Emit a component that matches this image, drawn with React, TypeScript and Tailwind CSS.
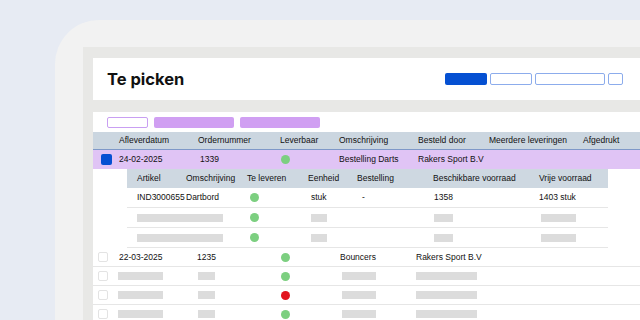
import React from "react";

const font = { fontFamily: '"Liberation Sans", Arial, sans-serif' };

const Dot = ({ red = false, className = "" }: { red?: boolean; className?: string }) => (
  <span
    className={`block w-[9px] h-[9px] rounded-full ${red ? "bg-[#e2141e]" : "bg-[#7ccf80]"} ${className}`}
  />
);

const Bar = ({ w }: { w: string }) => <span className={`block h-[8px] bg-[#dcdcdc] ${w}`} />;

const mainCols = "grid grid-cols-[26px_79px_82px_59px_79px_71px_94px_1fr] items-center";
const subCols = "grid grid-cols-[49px_61px_61px_49px_76px_106px_1fr] items-center";

const EmptyBox = () => (
  <span className="block w-[10px] h-[10px] ml-[5px] rounded-[2px] border border-[#e3e3e3] bg-white" />
);

const PlaceholderRow = ({ red = false }: { red?: boolean }) => (
  <div className={`${mainCols} h-[19px] border-b border-[#e6e6e6]`}>
    <EmptyBox />
    <Bar w="w-[45px] -ml-[1px]" />
    <Bar w="w-[17px]" />
    <Dot red={red} className="ml-[1px]" />
    <Bar w="w-[34px] ml-[3px]" />
    <Bar w="w-[61px] -ml-[2px]" />
    <span />
    <span />
  </div>
);

const SubPlaceholder = () => (
  <div className="pl-[10px] border-b border-[#e6e6e6]">
    <div className={`${subCols} h-[19px]`}>
      <span className="col-span-2">
        <Bar w="w-[86px]" />
      </span>
      <Dot className="ml-[3px]" />
      <Bar w="w-[16px] ml-[3px]" />
      <span />
      <Bar w="w-[19px] ml-[1px]" />
      <Bar w="w-[35px] ml-[2px]" />
    </div>
  </div>
);

export default function App() {
  return (
    <div className="w-[640px] h-[320px] overflow-hidden bg-[#e7ebf3] pt-[20px] pl-[55px]">
      <div className="h-full bg-[#f2f2f2] rounded-tl-[44px] pt-[27px] pl-[28px]">
        <div className="h-full bg-[#e8e8e6] pt-[11px] pl-[10px]">
          {/* header card */}
          <div className="h-[42px] bg-white flex items-center justify-between pl-[14px] pr-[17px]">
            <h1
              className="text-[16.5px] font-bold text-[#111]"
              style={{ fontFamily: "Inter, sans-serif" }}
            >
              Te picken
            </h1>
            <div className="flex gap-[3px] h-[12px]">
              <span className="block w-[42px] h-[12px] rounded-[2px] bg-[#0550d2]" />
              <span className="block w-[42px] h-[12px] rounded-[2px] border border-[#8cacec] bg-white" />
              <span className="block w-[70px] h-[12px] rounded-[2px] border border-[#8cacec] bg-white" />
              <span className="block w-[15px] h-[12px] rounded-[2px] border border-[#8cacec] bg-white" />
            </div>
          </div>

          {/* table section */}
          <div className="mt-[12px] h-full bg-white pt-[5px] text-[8.5px] text-[#111]" style={font}>
            <div className="flex gap-[6px] pl-[14px] h-[11px]">
              <span className="block w-[41px] h-[11px] rounded-[2px] border border-[#c99ff2] bg-white" />
              <span className="block w-[80px] h-[11px] rounded-[2px] bg-[#d09ff2]" />
              <span className="block w-[80px] h-[11px] rounded-[2px] bg-[#d09ff2]" />
            </div>

            {/* table header */}
            <div className={`${mainCols} mt-[4px] h-[18px] bg-[#cbd6e0] border-b border-[#7e98c8]`}>
              <span />
              <span>Afleverdatum</span>
              <span>Ordernummer</span>
              <span>Leverbaar</span>
              <span>Omschrijving</span>
              <span>Besteld door</span>
              <span>Meerdere leveringen</span>
              <span>Afgedrukt</span>
            </div>

            {/* selected row */}
            <div className={`${mainCols} h-[19px] bg-[#e0c4f5]`}>
              <span className="block w-[11px] h-[11px] ml-[8px] rounded-[2px] bg-[#0550d2]" />
              <span>24-02-2025</span>
              <span className="pl-[2px]">1339</span>
              <Dot className="ml-[1px]" />
              <span>Bestelling Darts</span>
              <span>Rakers Sport B.V</span>
              <span />
              <span />
            </div>

            {/* sub table */}
            <div className="ml-[34px] w-[481px]">
              <div className={`${subCols} h-[19px] pl-[10px] bg-[#ced8e1]`}>
                <span>Artikel</span>
                <span>Omschrijving</span>
                <span>Te leveren</span>
                <span>Eenheid</span>
                <span>Bestelling</span>
                <span>Beschikbare voorraad</span>
                <span>Vrije voorraad</span>
              </div>
              <div className="pl-[10px] border-b border-[#e6e6e6]">
                <div className={`${subCols} h-[19px]`}>
                  <span>IND3000655</span>
                  <span>Dartbord</span>
                  <Dot className="ml-[3px]" />
                  <span className="pl-[3px]">stuk</span>
                  <span className="pl-[5px]">-</span>
                  <span className="pl-[1px]">1358</span>
                  <span>1403 stuk</span>
                </div>
              </div>
              <SubPlaceholder />
              <SubPlaceholder />
            </div>

            {/* other orders */}
            <div className={`${mainCols} h-[19px] border-b border-[#e6e6e6]`}>
              <EmptyBox />
              <span>22-03-2025</span>
              <span className="-ml-[1px]">1235</span>
              <Dot className="ml-[1px]" />
              <span className="pl-[1px]">Bouncers</span>
              <span className="-ml-[2px]">Rakers Sport B.V</span>
              <span />
              <span />
            </div>
            <PlaceholderRow />
            <PlaceholderRow red />
            <PlaceholderRow />
          </div>
        </div>
      </div>
    </div>
  );
}
